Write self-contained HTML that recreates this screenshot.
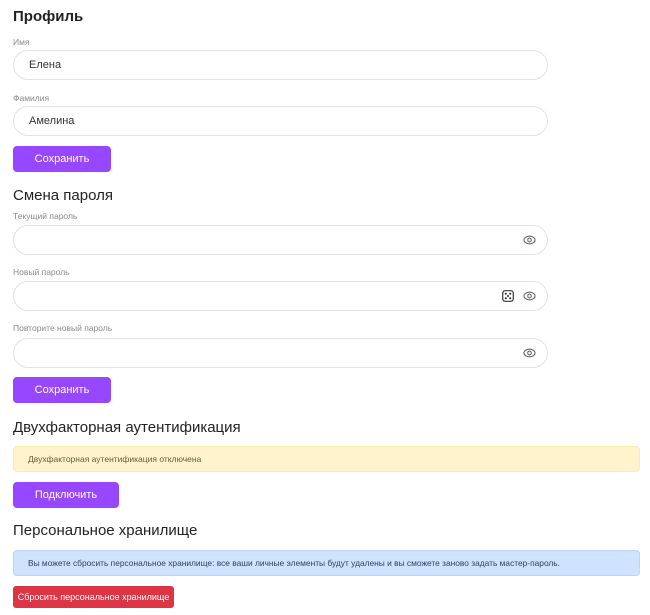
<!DOCTYPE html>
<html><head><meta charset="utf-8"><style>
*{margin:0;padding:0;box-sizing:border-box}
body{width:650px;height:615px;background:#fff;font-family:"Liberation Sans",sans-serif;color:#222;position:relative;overflow:hidden}
.a{position:absolute}
h2{position:absolute;left:13px;font-size:15px;font-weight:normal;color:#222;line-height:20px}
.lbl{position:absolute;left:13px;font-size:8.5px;color:#8a8a8a;line-height:10px}
.inp{position:absolute;left:13px;width:535px;height:30px;border:1px solid #e2e2e2;border-radius:15px;font-size:11px;color:#333;padding-left:15px;line-height:28px}
.btn{position:absolute;left:13px;background:#9747ff;color:#fff;border-radius:4px;font-size:11px;text-align:center}
.eye{position:absolute;right:11px;top:8px}
</style></head><body>
<h2 style="top:7px;font-weight:bold;font-size:15px">Профиль</h2>
<div class="lbl" style="top:37px">Имя</div>
<div class="inp" style="top:50px">Елена</div>
<div class="lbl" style="top:93px">Фамилия</div>
<div class="inp" style="top:106px">Амелина</div>
<div class="btn" style="top:146px;width:98px;height:26px;line-height:26px">Сохранить</div>

<h2 style="top:186px">Смена пароля</h2>
<div class="lbl" style="top:211px">Текущий пароль</div>
<div class="inp" style="top:225px"><svg class="eye" width="13" height="12" viewBox="0 0 13 12"><ellipse cx="6.5" cy="6" rx="5.5" ry="3.8" fill="none" stroke="#666" stroke-width="1.1"/><circle cx="6.5" cy="6" r="1.8" fill="none" stroke="#666" stroke-width="1.1"/></svg></div>
<div class="lbl" style="top:267px">Новый пароль</div>
<div class="inp" style="top:281px"><svg class="a" style="left:488px;top:8px" width="12" height="12" viewBox="0 0 12 12"><rect x="0.7" y="0.7" width="10.6" height="10.6" rx="2.5" fill="none" stroke="#333" stroke-width="1.2"/><circle cx="3.8" cy="3.8" r="1" fill="#222"/><circle cx="8.2" cy="3.8" r="1" fill="#222"/><circle cx="6" cy="6" r="1" fill="#222"/><circle cx="3.8" cy="8.2" r="1" fill="#222"/><circle cx="8.2" cy="8.2" r="1" fill="#222"/></svg><svg class="eye" width="13" height="12" viewBox="0 0 13 12"><ellipse cx="6.5" cy="6" rx="5.5" ry="3.8" fill="none" stroke="#666" stroke-width="1.1"/><circle cx="6.5" cy="6" r="1.8" fill="none" stroke="#666" stroke-width="1.1"/></svg></div>
<div class="lbl" style="top:323px">Повторите новый пароль</div>
<div class="inp" style="top:338px"><svg class="eye" width="13" height="12" viewBox="0 0 13 12"><ellipse cx="6.5" cy="6" rx="5.5" ry="3.8" fill="none" stroke="#666" stroke-width="1.1"/><circle cx="6.5" cy="6" r="1.8" fill="none" stroke="#666" stroke-width="1.1"/></svg></div>
<div class="btn" style="top:377px;width:98px;height:26px;line-height:26px">Сохранить</div>

<h2 style="top:418px">Двухфакторная аутентификация</h2>
<div class="a" style="left:13px;top:446px;width:627px;height:26px;background:#fff3cd;border:1px solid #ffeaa8;border-radius:4px;font-size:8.5px;color:#665c3a;line-height:24px;padding-left:14px">Двухфакторная аутентификация отключена</div>
<div class="btn" style="top:482px;width:106px;height:26px;line-height:26px">Подключить</div>

<h2 style="top:521px">Персональное хранилище</h2>
<div class="a" style="left:13px;top:550px;width:627px;height:26px;background:#cfe2ff;border:1px solid #b6d4fe;border-radius:4px;font-size:8.4px;color:#2f3f66;line-height:24px;padding-left:14px">Вы можете сбросить персональное хранилище: все ваши личные элементы будут удалены и вы сможете заново задать мастер-пароль.</div>
<div class="btn" style="top:586px;width:161px;height:22px;line-height:22px;background:#dc3545;border-radius:3px;font-size:9px">Сбросить персональное хранилище</div>
</body></html>
